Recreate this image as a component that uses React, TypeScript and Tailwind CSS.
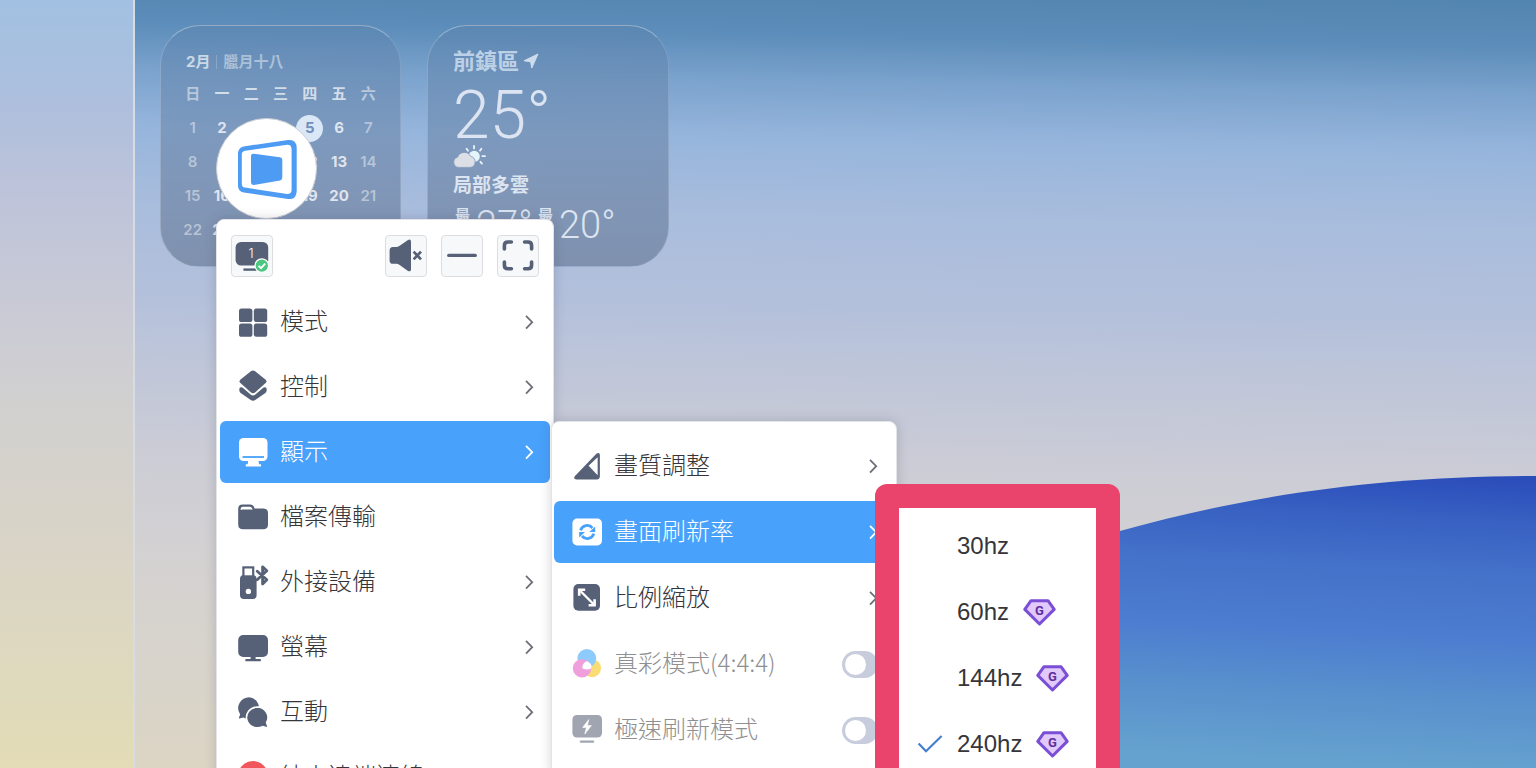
import type { ReactNode } from "react";

const DARK = "#566177";

function Glyph({ children }: { children: ReactNode }) {
  return (
    <svg viewBox="0 0 30 30" className="h-[30px] w-[30px] shrink-0 overflow-visible" fill="none" aria-hidden>
      {children}
    </svg>
  );
}

const GridIcon = () => (
  <Glyph>
    <g fill={DARK}>
      <rect x="1" y="1.6" width="13.4" height="13.4" rx="2.6" />
      <rect x="15.8" y="1.6" width="13.4" height="13.4" rx="2.6" />
      <rect x="1" y="16.4" width="13.4" height="13.4" rx="2.6" />
      <rect x="15.8" y="16.4" width="13.4" height="13.4" rx="2.6" />
    </g>
  </Glyph>
);

const LayersIcon = () => (
  <Glyph>
    <path
      d="M13.2 -1Q15 -2.2 16.8 -1L27.4 7.4Q29.4 9.1 27.6 11.1L17 20.4Q15 22 13 20.4L2.4 11.1Q0.6 9.1 2.6 7.4Z"
      fill={DARK}
    />
    <path
      d="M2 15.6Q3.4 14.6 4.8 15.8L12.6 22.6Q15 24.3 17.4 22.6L25.2 15.8Q26.6 14.6 28 15.6Q29.2 17.2 28.4 19.4Q28 20.4 27 21.2L17.6 27.8Q15 29.6 12.4 27.8L3 21.2Q2 20.4 1.6 19.4Q0.8 17.2 2 15.6Z"
      fill={DARK}
    />
  </Glyph>
);

const DisplayIcon = () => (
  <Glyph>
    <rect x="1" y="1" width="28.5" height="23" rx="4.5" fill="#fff" />
    <path d="M4.5 20H26" stroke="#48a1fb" strokeWidth="1.8" />
    <path d="M10 24H20.5L21 27.2H23V29.4H7.8V27.2H9.8Z" fill="#fff" />
  </Glyph>
);

const FolderIcon = () => (
  <Glyph>
    <path
      d="M0.2 7Q0.2 2.6 4.6 2.6H12.4Q14.6 2.6 15.8 4.4L16.6 6.4H25.4Q30 6.4 30 11V22.4Q30 27.2 25.2 27.2H5Q0.2 27.2 0.2 22.4Z"
      fill={DARK}
    />
    <path d="M2.6 8V7Q2.8 4.8 4.8 4.8H12Q13.4 4.8 14.2 6.4L14.8 7.6H4.4Q3.2 7.6 2.6 8Z" fill="#fff" />
  </Glyph>
);

const DevicesIcon = () => (
  <Glyph>
    <rect x="2" y="8" width="16.6" height="24" rx="4" fill={DARK} />
    <rect x="5.4" y="0.4" width="9.8" height="9" fill="#fff" stroke={DARK} strokeWidth="2.2" />
    <circle cx="10.4" cy="24.4" r="2.7" fill="#fff" />
    <path
      d="M19.2 4.2L28.8 12.8L24.6 17V-0.2L28.8 3.8L19.2 12.8"
      stroke={DARK}
      strokeWidth="2.8"
      strokeLinejoin="round"
      strokeLinecap="round"
    />
  </Glyph>
);

const ScreenIcon = () => (
  <Glyph>
    <rect x="0.2" y="3" width="29.8" height="22" rx="5" fill={DARK} />
    <path d="M12.6 25H17.6V27H22.8V29.2H7.4V27H12.6Z" fill={DARK} />
  </Glyph>
);

const ChatIcon = () => (
  <Glyph>
    <path
      d="M11.4 0.2A11.2 11 0 0 1 11.4 22Q7 22 5.4 20.6L1.4 21.4Q0.6 21.4 1 20.4L2.2 17.4A11.2 11 0 0 1 11.4 0.2Z"
      fill={DARK}
    />
    <path
      d="M19 10A11 10.4 0 0 1 28.6 25.4L30 29.8Q30 31 28.8 30.8L24.6 29.6A11 10.4 0 1 1 19 10Z"
      fill={DARK}
      stroke="#fff"
      strokeWidth="1.6"
    />
  </Glyph>
);

const EndIcon = () => (
  <Glyph>
    <circle cx="15" cy="14" r="15" fill="#f0565b" />
    <path d="M10 10L20 20M20 10L10 20" stroke="#fff" strokeWidth="2.5" strokeLinecap="round" />
  </Glyph>
);

const QualityIcon = () => (
  <Glyph>
    <path d="M24.6 2.6Q27.9 1 27.9 4.6V25Q27.9 28.4 24.9 28.4H4.4Q0.8 28 3 25Z" fill={DARK} />
    <path d="M25.6 6.2V24.2L16.6 14.8Z" fill="#fff" />
  </Glyph>
);

const RefreshIcon = () => (
  <Glyph>
    <rect x="0.4" y="1.6" width="29.6" height="26.8" rx="4.6" fill="#fff" />
    <path d="M8.6 13.4A6.8 6.8 0 0 1 20.4 11M21.8 16.6A6.8 6.8 0 0 1 10 19" stroke="#48a1fb" strokeWidth="2.8" />
    <path d="M23.2 9.4V15H17.4Z" fill="#48a1fb" />
    <path d="M7.2 20.6V15H13Z" fill="#48a1fb" />
  </Glyph>
);

const ScaleIcon = () => (
  <Glyph>
    <rect x="1.4" y="1" width="26.6" height="26.8" rx="5" fill={DARK} />
    <path d="M8.4 8L21.4 21" stroke="#fff" strokeWidth="2.4" />
    <path d="M7.2 12.8V6.8H13.2M16.6 22.2H22.6V16.2" stroke="#fff" strokeWidth="2.6" />
  </Glyph>
);

const ColorIcon = () => (
  <Glyph>
    <circle cx="20" cy="19.2" r="9" fill="#f9dc74" />
    <circle cx="14.8" cy="9.4" r="9.4" fill="#8ccbfb" />
    <circle cx="10" cy="19.2" r="9.2" fill="#ef9fdc" />
    <path d="M14.8 12Q20.4 14.6 19.4 19.2Q15 21.6 10.4 19.2Q9.8 14.6 14.8 12Z" fill="#fff" />
  </Glyph>
);

const BoostIcon = () => (
  <Glyph>
    <rect x="0.4" y="0" width="29.6" height="22.6" rx="4.6" fill="#a0a5b1" />
    <path d="M16.8 4.6L10.6 12.4H14.4L12.8 19L19.4 10.6H15.4Z" fill="#fff" stroke="#fff" strokeWidth="0.6" />
    <path d="M9 26.6H21" stroke="#a0a5b1" strokeWidth="2.4" strokeLinecap="round" />
  </Glyph>
);

const Chevron = () => (
  <svg viewBox="0 0 10 16" className="h-4 w-2.5 shrink-0" fill="none" stroke="currentColor" strokeWidth="1.8" aria-hidden>
    <path d="M2 1.8L8.2 8.2L2 14.6" />
  </svg>
);

const Gem = () => (
  <svg viewBox="0 0 33 27" className="ml-3.5 h-[27px] w-[33px] shrink-0" aria-hidden>
    <path d="M8 1.7H25L31.2 10.4L16.5 25L1.8 10.4Z" fill="#e2c9fb" stroke="#7a4fd6" strokeWidth="3" strokeLinejoin="round" />
    <text x="16.5" y="16.4" textAnchor="middle" fontSize="13" fontWeight="700" fill="#5e2f9e" className="font-['Roboto',sans-serif]">
      G
    </text>
  </svg>
);

type Item = { label: string; icon: () => ReactNode; arrow?: boolean; active?: boolean; toggle?: boolean };

const mainItems: Item[] = [
  { label: "模式", icon: GridIcon, arrow: true },
  { label: "控制", icon: LayersIcon, arrow: true },
  { label: "顯示", icon: DisplayIcon, arrow: true, active: true },
  { label: "檔案傳輸", icon: FolderIcon },
  { label: "外接設備", icon: DevicesIcon, arrow: true },
  { label: "螢幕", icon: ScreenIcon, arrow: true },
  { label: "互動", icon: ChatIcon, arrow: true },
  { label: "結束遠端連線", icon: EndIcon },
];

const displayItems: Item[] = [
  { label: "畫質調整", icon: QualityIcon, arrow: true },
  { label: "畫面刷新率", icon: RefreshIcon, arrow: true, active: true },
  { label: "比例縮放", icon: ScaleIcon, arrow: true },
  { label: "真彩模式(4:4:4)", icon: ColorIcon, toggle: true },
  { label: "極速刷新模式", icon: BoostIcon, toggle: true },
];

const rates = [
  { label: "30hz", premium: false },
  { label: "60hz", premium: true },
  { label: "144hz", premium: true },
  { label: "240hz", premium: true },
];

function MenuRow({ item }: { item: Item }) {
  const Icon = item.icon;
  if (item.toggle) {
    return (
      <label className="flex h-[62px] items-center gap-3 pr-4 pl-[18px] text-[#8f8f91]">
        <Icon />
        <span className="flex-1 pb-1 whitespace-nowrap">{item.label}</span>
        <input
          type="checkbox"
          role="switch"
          className="h-[27px] w-9 appearance-none rounded-full bg-[#c8cddd] before:m-[3px] before:block before:h-[21px] before:w-[21px] before:rounded-full before:bg-white"
        />
      </label>
    );
  }
  return (
    <button
      type="button"
      className={
        item.active
          ? "flex h-[62px] w-full items-center gap-3 rounded-md bg-[#48a1fb] pr-4 pl-[18px] text-left text-white"
          : "flex h-[62px] w-full items-center gap-3 rounded-md pr-4 pl-[18px] text-left text-[#36363a]"
      }
    >
      <Icon />
      <span className="flex-1 pb-1 whitespace-nowrap">{item.label}</span>
      {item.arrow && (
        <span className={item.active ? "text-white" : "text-[#6d6f78]"}>
          <Chevron />
        </span>
      )}
    </button>
  );
}

function ToolButton({ label, children }: { label: string; children: ReactNode }) {
  return (
    <button
      type="button"
      aria-label={label}
      className="flex h-[42px] w-[42px] items-center justify-center rounded-sm border border-[#dcdde1] bg-[#f7f8fa]"
    >
      {children}
    </button>
  );
}

function Toolbar() {
  return (
    <div className="flex items-center gap-3.5 px-[11px] pb-3.5">
      <ToolButton label="螢幕 1">
        <svg viewBox="0 0 36 34" className="h-[34px] w-9">
          <rect x="1.6" y="3" width="32.6" height="23.6" rx="5.4" fill={DARK} />
          <path d="M9.4 30.6H22.6" stroke={DARK} strokeWidth="2.4" />
          <text x="17" y="19.4" textAnchor="middle" fontSize="13" fill="#fff" className="font-['Inter',sans-serif]">
            1
          </text>
          <circle cx="27.8" cy="26.6" r="6.8" fill="#4cc782" stroke="#fff" strokeWidth="1.2" />
          <path d="M24.6 26.8L27 29.2L31.2 24.6" stroke="#fff" strokeWidth="1.8" fill="none" />
        </svg>
      </ToolButton>
      <span className="flex-1" />
      <ToolButton label="靜音">
        <svg viewBox="0 0 36 34" className="h-[34px] w-9 shrink-0">
          <path
            d="M1.6 11.6Q1.6 8 5 8H8.6Q10.6 7.8 12 6.6L20 1Q22.8 -0.2 23 2.4V30.4Q22.8 33.2 20 32L12 26.2Q10.6 25 8.6 24.8H5Q1.6 24.8 1.6 21.4Z"
            fill={DARK}
          />
          <path d="M25.6 12.6L33 20.4M33 12.6L25.6 20.4" stroke={DARK} strokeWidth="2.7" />
        </svg>
      </ToolButton>
      <ToolButton label="最小化">
        <svg viewBox="0 0 36 34" className="h-[34px] w-9">
          <path d="M4.8 16.4H31.2" stroke={DARK} strokeWidth="3.4" strokeLinecap="round" />
        </svg>
      </ToolButton>
      <ToolButton label="全螢幕">
        <svg viewBox="0 0 36 34" className="h-[34px] w-9" fill="none" stroke={DARK} strokeWidth="3.6" strokeLinecap="round">
          <path d="M4.4 10V6.6Q4.4 3 8 3H11.4M24.6 3H28Q31.6 3 31.6 6.6V10M31.6 23V26.2Q31.6 29.8 28 29.8H24.6M11.4 29.8H8Q4.4 29.8 4.4 26.2V23" />
        </svg>
      </ToolButton>
    </div>
  );
}

const weekdays = ["日", "一", "二", "三", "四", "五", "六"];
const weeks = [0, 1, 2, 3].map((w) => weekdays.map((_, d) => w * 7 + d + 1));

function CalendarWidget() {
  return (
    <section className="h-[242px] w-[241px] rounded-[40px] border border-t-white/35 border-r-white/15 border-b-white/5 border-l-white/20 bg-linear-to-b from-[#5b80aa]/35 to-[#5f7290]/60 px-[17px] pt-[25px] font-['Inter','Noto_Sans_CJK_TC',sans-serif] text-[15px] font-bold">
      <header className="flex h-[22px] items-center pl-2 leading-5 text-white/65">
        <span>2月</span>
        <span className="mx-1.5 h-3.5 w-px bg-white/20" />
        <span className="text-white/45">臘月十八</span>
      </header>
      <table className="mt-1 w-full table-fixed text-center">
        <thead>
          <tr className="h-[34px]">
            {weekdays.map((d, i) => (
              <th key={d} className={i % 6 === 0 ? "font-bold text-white/50" : "font-bold text-white/70"}>
                {d}
              </th>
            ))}
          </tr>
        </thead>
        <tbody>
          {weeks.map((week) => (
            <tr key={week[0]} className="h-[34px]">
              {week.map((n, i) => (
                <td key={n} className={i % 6 === 0 ? "p-0 font-semibold text-white/45" : "p-0 text-white/75"}>
                  {n === 5 ? (
                    <span className="mx-auto flex h-[27px] w-[27px] items-center justify-center rounded-full bg-[#d9e7f7] text-[#6f90bb]">5</span>
                  ) : (
                    n
                  )}
                </td>
              ))}
            </tr>
          ))}
        </tbody>
      </table>
    </section>
  );
}

function WeatherWidget() {
  return (
    <section className="h-[242px] w-[242px] rounded-[40px] border border-t-white/35 border-r-white/15 border-b-white/5 border-l-white/20 bg-linear-to-b from-[#5b80aa]/35 to-[#5f7290]/60 pt-[19px] pl-[25px] font-['Roboto','Noto_Sans_CJK_TC',sans-serif] text-[#dbe4f0]">
      <h2 className="flex h-8 items-center gap-1 text-[22px] font-bold text-[#bdd1e6]">
        前鎮區
        <svg viewBox="0 0 16 16" className="h-4 w-4" fill="#cddcec" aria-hidden>
          <path d="M15 1L8.8 15L7.6 8.8L1 7.8Z" stroke="#cddcec" strokeLinejoin="round" />
        </svg>
      </h2>
      <p className="h-[66px] text-[66px] leading-[78px] font-light">25°</p>
      <svg viewBox="0 0 33 23" className="mt-0.5 h-[23px] w-[33px]" aria-hidden>
        <g stroke="#eaf3fb" strokeWidth="1.8" strokeLinecap="round">
          <path d="M21 1V3.4M13.6 3.8L15 5.8M28.4 3.8L27 5.6M29.4 11.2H32M27.4 16.8L29 18.6M12.4 9L14 9.6" />
        </g>
        <circle cx="21.2" cy="11.4" r="5.6" fill="#e6f4fc" />
        <path d="M5.6 22.4A5.2 5.2 0 0 1 4.6 12.2A7.2 7.2 0 0 1 17.8 11.4A5.6 5.6 0 0 1 17.2 22.4Z" fill="#dcdfe6" stroke="#8499bc" strokeWidth="0.8" />
      </svg>
      <p className="mt-1 h-7 text-[19px] leading-7 font-bold">局部多雲</p>
      <div className="mt-1 flex items-start text-[38px] leading-[42px] font-light">
        <span className="mt-1 mr-1.5 ml-0.5 w-[15px] text-[15px] leading-4 font-bold">最高</span>
        <span className="w-[62px]">27°</span>
        <span className="mt-1 mr-1.5 w-[15px] text-[15px] leading-4 font-bold">最低</span>
        <span>20°</span>
      </div>
    </section>
  );
}

function Wallpaper() {
  return (
    <svg viewBox="0 0 450 300" className="absolute right-0 bottom-0 h-[300px] w-[450px]" aria-hidden>
      <defs>
        <linearGradient id="hill" x1="0.82" y1="0" x2="0.74" y2="1">
          <stop offset="0" stopColor="#2b4dba" />
          <stop offset="0.14" stopColor="#3760c2" />
          <stop offset="0.32" stopColor="#4471c9" />
          <stop offset="0.55" stopColor="#4c7dd0" />
          <stop offset="0.75" stopColor="#5890cd" />
          <stop offset="1" stopColor="#66a2cf" />
        </linearGradient>
      </defs>
      <path d="M0 74L34 63C160 28 290 8 450 8V300H0Z" fill="url(#hill)" />
    </svg>
  );
}

export default function App() {
  return (
    <div className="flex h-screen overflow-hidden font-['Noto_Sans_CJK_TC',sans-serif]">
      <aside className="w-[135px] shrink-0 border-r-2 border-[#d6dce2] bg-[linear-gradient(180deg,#a2c1e2_0%,#aebfdd_14%,#bcc3da_24%,#cbcbd5_42%,#d2d1cf_54%,#d8d3c8_68%,#dcd7c2_80%,#e3dcb6_100%)]" />
      <main className="relative flex-1 bg-[linear-gradient(181deg,#5285b0_0%,#5d8dba_6%,#7ba3cd_12%,#96b5dc_19%,#a9bddd_29%,#b3c0db_40%,#c3c8d8_52%,#cdcdd5_62%,#d3d1d2_72%,#d8d4cc_86%,#dcd5c4_100%)]">
        <Wallpaper />
        <div className="relative flex gap-[26px] pt-[25px] pl-[25px]">
          <CalendarWidget />
          <WeatherWidget />
        </div>

        <button
          type="button"
          aria-label="遠端選單"
          className="absolute top-[118px] left-[81px] flex h-[101px] w-[101px] items-center justify-center rounded-full border border-[#c9ccd3] bg-white"
        >
          <svg viewBox="0 0 60 60" className="h-[60px] w-[60px]" fill="#4d9bf3" aria-hidden>
            <path
              fillRule="evenodd"
              d="M6.6 7.4L51 1Q59.6 0 59.7 9V52Q59.4 61 51 60L6.8 53.6Q1 52.4 1 47V14Q1.4 8.6 6.6 7.4ZM8.2 11.8Q4.8 12.4 4.8 15.6V45Q4.8 48 8 48.6L50 55Q54.4 55.2 54.6 51V10Q54.4 5.4 50 5.8Z"
            />
            <path d="M16.4 14.7L42.8 18.2Q45.3 18.6 45.3 20.8V38.6Q45.3 41 43 41.4L16.8 46Q14 46.2 14 43.6V17Q14 14.6 16.4 14.7Z" />
          </svg>
        </button>

        <nav
          aria-label="主選單"
          className="absolute top-[219px] left-[81px] w-[338px] rounded-lg border border-[#e3e4e8] bg-white px-[3px] pt-[15px] pb-4 text-[24px] leading-8 font-light shadow-[0_0_12px_rgba(60,60,80,0.22)]"
        >
          <Toolbar />
          <div className="flex flex-col gap-[3px]">
            {mainItems.map((item) => (
              <MenuRow key={item.label} item={item} />
            ))}
          </div>
        </nav>

        <nav
          aria-label="顯示"
          className="absolute top-[421px] left-[416px] w-[346px] rounded-lg border border-[#e3e4e8] bg-white px-0.5 pt-[13px] pb-4 text-[24px] leading-8 font-light shadow-[0_0_12px_rgba(60,60,80,0.22)]"
        >
          <div className="flex flex-col gap-1">
            {displayItems.map((item) => (
              <MenuRow key={item.label} item={item} />
            ))}
          </div>
        </nav>

        <div className="absolute top-[484px] left-[740px] w-[245px] rounded-xl bg-[#ea436c] p-6">
          <fieldset
            aria-label="畫面刷新率"
            className="bg-white pt-[5px] pb-8 font-['Liberation_Sans','Noto_Sans_CJK_TC',sans-serif] text-[24px] text-[#36363a]"
          >
            {rates.map((rate) => (
              <label key={rate.label} className="flex h-[66px] items-center pl-[18px]">
                <input type="radio" name="rate" defaultChecked={rate.label === "240hz"} className="peer sr-only" />
                <svg
                  viewBox="0 0 26 20"
                  className="invisible mr-3.5 h-5 w-[26px] shrink-0 peer-checked:visible"
                  fill="none"
                  stroke="#4380cf"
                  strokeWidth="2.2"
                  aria-hidden
                >
                  <path d="M1.6 9.4L9 17.2L24.6 2" />
                </svg>
                <span>{rate.label}</span>
                {rate.premium && <Gem />}
              </label>
            ))}
          </fieldset>
        </div>
      </main>
    </div>
  );
}
